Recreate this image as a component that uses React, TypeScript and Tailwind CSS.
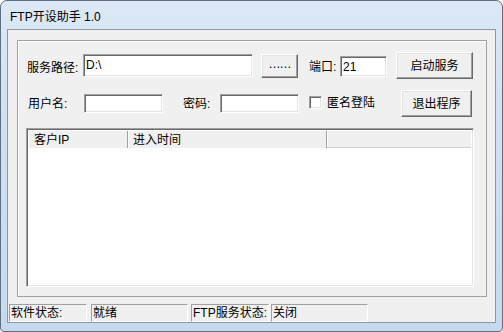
import React from 'react';

const sunken =
  'bg-white border border-t-[#a0a0a0] border-l-[#a0a0a0] border-b-white border-r-white shadow-[inset_1px_1px_0_#696969,inset_-1px_-1px_0_#e3e3e3]';
const raised =
  'bg-[#f0f0f0] border border-t-white border-l-white border-b-[#696969] border-r-[#696969] shadow-[inset_-1px_-1px_0_#a0a0a0,inset_1px_1px_0_#e3e3e3] flex items-center justify-center';
const cell =
  'h-full border border-t-[#a0a0a0] border-l-[#a0a0a0] border-b-white border-r-white pl-[1px] flex items-center leading-none';

const App = () => {
  return (
    <div className="w-[503px] h-[332px] flex flex-col rounded-t-[7px] rounded-b-[4px] border border-[#5f6e80] bg-[linear-gradient(180deg,#dce8f5_0%,#cfe0f2_40%,#c6d9ee_100%)] text-[12px] text-black font-['Liberation_Sans','Noto_Sans_CJK_SC',sans-serif] overflow-hidden">
      {/* title bar */}
      <div className="h-[28px] flex items-center pl-[9px] pt-[3px] leading-none">FTP开设助手 1.0</div>

      {/* client area */}
      <div className="mx-[6px] h-[294px] border border-[#8a98a8] bg-[#f0f0f0] flex flex-col">
        <div className="ml-[9px] mt-[10px] w-[470px] h-[257px] border border-[#a0a0a0] shadow-[inset_1px_1px_0_#fff] flex flex-col">
          {/* row 1 */}
          <div className="mt-[11px] h-[27px] flex items-center pl-[9px]">
            <span className="w-[56px] pt-[5px] leading-none">服务路径:</span>
            <div className={`w-[170px] h-[23px] ${sunken} pl-[2px] pt-[4px] leading-none`}>D:\</div>
            <button className={`ml-[8px] w-[37px] h-[24px] ${raised} leading-none pb-[3px] tracking-[-1px]`}>……</button>
            <span className="ml-[11px] w-[31px] pt-[3px] leading-none">端口:</span>
            <div className={`w-[47px] h-[21px] mt-[2px] ${sunken} pl-[2px] pt-[4px] leading-none`}>21</div>
            <button className={`ml-[9px] w-[77px] h-[27px] ${raised} leading-none`}>启动服务</button>
          </div>

          {/* row 2 */}
          <div className="mt-[11px] h-[27px] flex items-center pl-[10px]">
            <span className="w-[56px] leading-none">用户名:</span>
            <div className={`w-[79px] h-[19px] ${sunken}`} />
            <span className="ml-[20px] w-[37px] leading-none">密码:</span>
            <div className={`w-[79px] h-[19px] ${sunken}`} />
            <div className={`ml-[10px] w-[13px] h-[13px] -mt-[3px] ${sunken}`} />
            <span className="ml-[5px] w-[74px] leading-none -mt-[2px]">匿名登陆</span>
            <button className={`w-[71px] h-[27px] ${raised} leading-none`}>退出程序</button>
          </div>

          {/* client list */}
          <div className={`mt-[11px] ml-[8px] w-[448px] h-[159px] ${sunken} p-[2px] flex flex-col`}>
            <div className="h-[17px] flex bg-[#f0f0f0] leading-none">
              <div className="w-[99px] h-full flex items-center pl-[5px] border-r border-r-[#a0a0a0] shadow-[1px_0_0_#fff]">客户IP</div>
              <div className="w-[199px] h-full flex items-center pl-[5px] border-r border-r-[#a0a0a0] shadow-[1px_0_0_#fff]">进入时间</div>
              <div className="flex-1 h-full border-b border-b-[#d0d0d0]" />
            </div>
            <div className="flex-1 bg-white" />
          </div>
        </div>

        {/* status bar */}
        <div className="mt-[7px] h-[18px] flex">
          <div className={`ml-[1px] w-[78px] ${cell}`}>软件状态:</div>
          <div className={`ml-[4px] w-[97px] ${cell}`}>就绪</div>
          <div className={`ml-[3px] w-[78px] ${cell}`}>FTP服务状态:</div>
          <div className={`ml-[2px] w-[97px] ${cell}`}>关闭</div>
        </div>
      </div>
    </div>
  );
};

export default App;
